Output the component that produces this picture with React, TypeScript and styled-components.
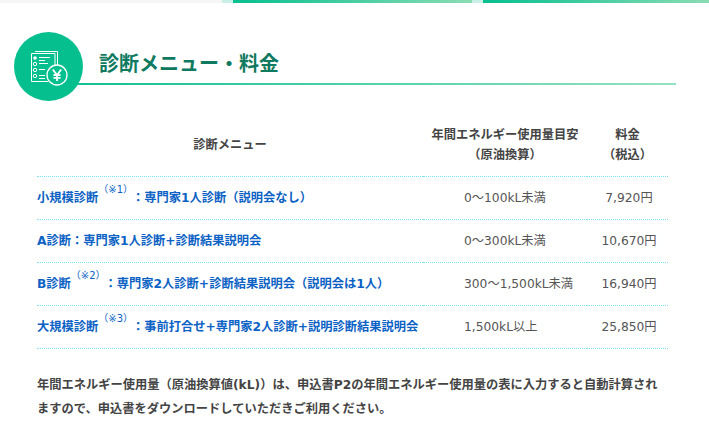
import styled, { createGlobalStyle } from "styled-components";

const Global = createGlobalStyle`
  html, body {
    margin: 0;
    padding: 0;
    background: #fff;
  }
  * {
    box-sizing: border-box;
  }
  body {
    font-family: "DejaVu Sans", "Noto Sans CJK JP", sans-serif;
    color: #444;
    overflow: hidden;
  }
`;

const Page = styled.div`
  width: 709px;
  height: 432px;
  overflow: hidden;
`;

const TopBar = styled.div`
  display: flex;
  height: 3px;
  background: #f6f6f6;
  padding-left: 222px;
`;

const TopSegment = styled.div<{ $width: number }>`
  flex: none;
  display: flex;
  width: ${(p) => p.$width}px;
  background: #c9efe6;
  padding-left: 11px;
  &::after {
    content: "";
    flex: 1;
    background: linear-gradient(90deg, #06bf8f, #8adcb4);
  }
`;

const Heading = styled.div`
  display: flex;
  align-items: flex-start;
  margin: 29px 33px 0 14px;
`;

const Circle = styled.div`
  flex: none;
  position: relative;
  z-index: 1;
  width: 69px;
  height: 69px;
  border-radius: 50%;
  background: #06bf8f;
`;

const TitleWrap = styled.div`
  flex: 1;
  height: 53px;
  margin-left: -10px;
  padding-left: 26px;
  border-bottom: 2px solid transparent;
  border-image: linear-gradient(90deg, #12c093, #96e2c2) 1;
`;

const Title = styled.h2`
  margin: 19px 0 0;
  font-size: 20px;
  line-height: 26px;
  font-weight: 700;
  color: #0f7a60;
`;

const Table = styled.table`
  width: 631px;
  margin: 11px 0 0 37px;
  border-collapse: collapse;
  table-layout: fixed;
`;

const HeadCell = styled.th`
  height: 64px;
  padding: 2px 0 0;
  font-size: 12.25px;
  line-height: 20px;
  font-weight: 700;
  text-align: center;
  color: #444;
  border-bottom: 1px dotted #7adff0;
`;

const Cell = styled.td`
  height: 43px;
  padding: 0;
  font-size: 12.25px;
  line-height: 20px;
  color: #555;
  border-bottom: 1px dotted #7adff0;
`;

const MenuCell = styled(Cell)`
  font-weight: 700;
  color: #0b62c4;
`;

const UsageCell = styled(Cell)`
  padding-left: 41px;
`;

const PriceCell = styled(Cell)`
  padding-left: 3px;
  text-align: center;
`;

const Note = styled.sup`
  position: relative;
  top: -9px;
  margin-right: 4px;
  font-size: 10px;
  line-height: 0;
  font-weight: 400;
  vertical-align: baseline;
`;

const Paragraph = styled.p`
  width: 630px;
  margin: 24px 0 0 37px;
  font-size: 12.25px;
  line-height: 24px;
  font-weight: 700;
  color: #444;
`;

const rows = [
  { label: "小規模診断", note: "（※1）", rest: "：専門家1人診断（説明会なし）", usage: "0～100kL未満", price: "7,920円" },
  { label: "", note: "", rest: "A診断：専門家1人診断+診断結果説明会", usage: "0～300kL未満", price: "10,670円" },
  { label: "B診断", note: "（※2）", rest: "：専門家2人診断+診断結果説明会（説明会は1人）", usage: "300～1,500kL未満", price: "16,940円" },
  { label: "大規模診断", note: "（※3）", rest: "：事前打合せ+専門家2人診断+説明診断結果説明会", usage: "1,500kL以上", price: "25,850円" },
];

const MenuIcon = () => (
  <svg width="69" height="69" viewBox="0 0 69 69" fill="none" stroke="#fff" strokeWidth="1">
    <path d="M21 19.500h22.500v18" />
    <path d="M34 49.500H17.500V21.500H41V35" />
    <circle cx="21" cy="26" r="1.800" fill="#fff" stroke="none" />
    <circle cx="21" cy="32" r="1.700" />
    <circle cx="21" cy="38" r="1.700" />
    <circle cx="21" cy="44" r="1.700" />
    <path d="M25 25.500h11M25 28.500h6M25 31.500h9M25 37.500h6M25 43.500h6M25 46.500h6" />
    <circle cx="43" cy="43" r="10" fill="#06bf8f" strokeWidth="1.300" />
    <path d="M38.800 37.500l4.200 5.500 4.200-5.500M43 43v6M39.500 43h7M39.500 45.800h7" strokeWidth="1.800" />
  </svg>
);

const App = () => {
  return (
    <Page>
      <Global />
      <TopBar>
        <TopSegment $width={250} />
        <TopSegment $width={237} />
      </TopBar>
      <Heading>
        <Circle>
          <MenuIcon />
        </Circle>
        <TitleWrap>
          <Title>診断メニュー・料金</Title>
        </TitleWrap>
      </Heading>
      <Table>
        <colgroup>
          <col style={{ width: 386 }} />
          <col style={{ width: 164 }} />
          <col style={{ width: 81 }} />
        </colgroup>
        <thead>
          <tr>
            <HeadCell>診断メニュー</HeadCell>
            <HeadCell>
              年間エネルギー使用量目安
              <br />
              （原油換算）
            </HeadCell>
            <HeadCell>
              料金
              <br />
              （税込）
            </HeadCell>
          </tr>
        </thead>
        <tbody>
          {rows.map((row) => (
            <tr key={row.usage}>
              <MenuCell>
                {row.label}
                {row.note && <Note>{row.note}</Note>}
                {row.rest}
              </MenuCell>
              <UsageCell>{row.usage}</UsageCell>
              <PriceCell>{row.price}</PriceCell>
            </tr>
          ))}
        </tbody>
      </Table>
      <Paragraph>
        年間エネルギー使用量（原油換算値(kL)）は、申込書P2の年間エネルギー使用量の表に入力すると自動計算されますので、申込書をダウンロードしていただきご利用ください。
      </Paragraph>
    </Page>
  );
};

export default App;
